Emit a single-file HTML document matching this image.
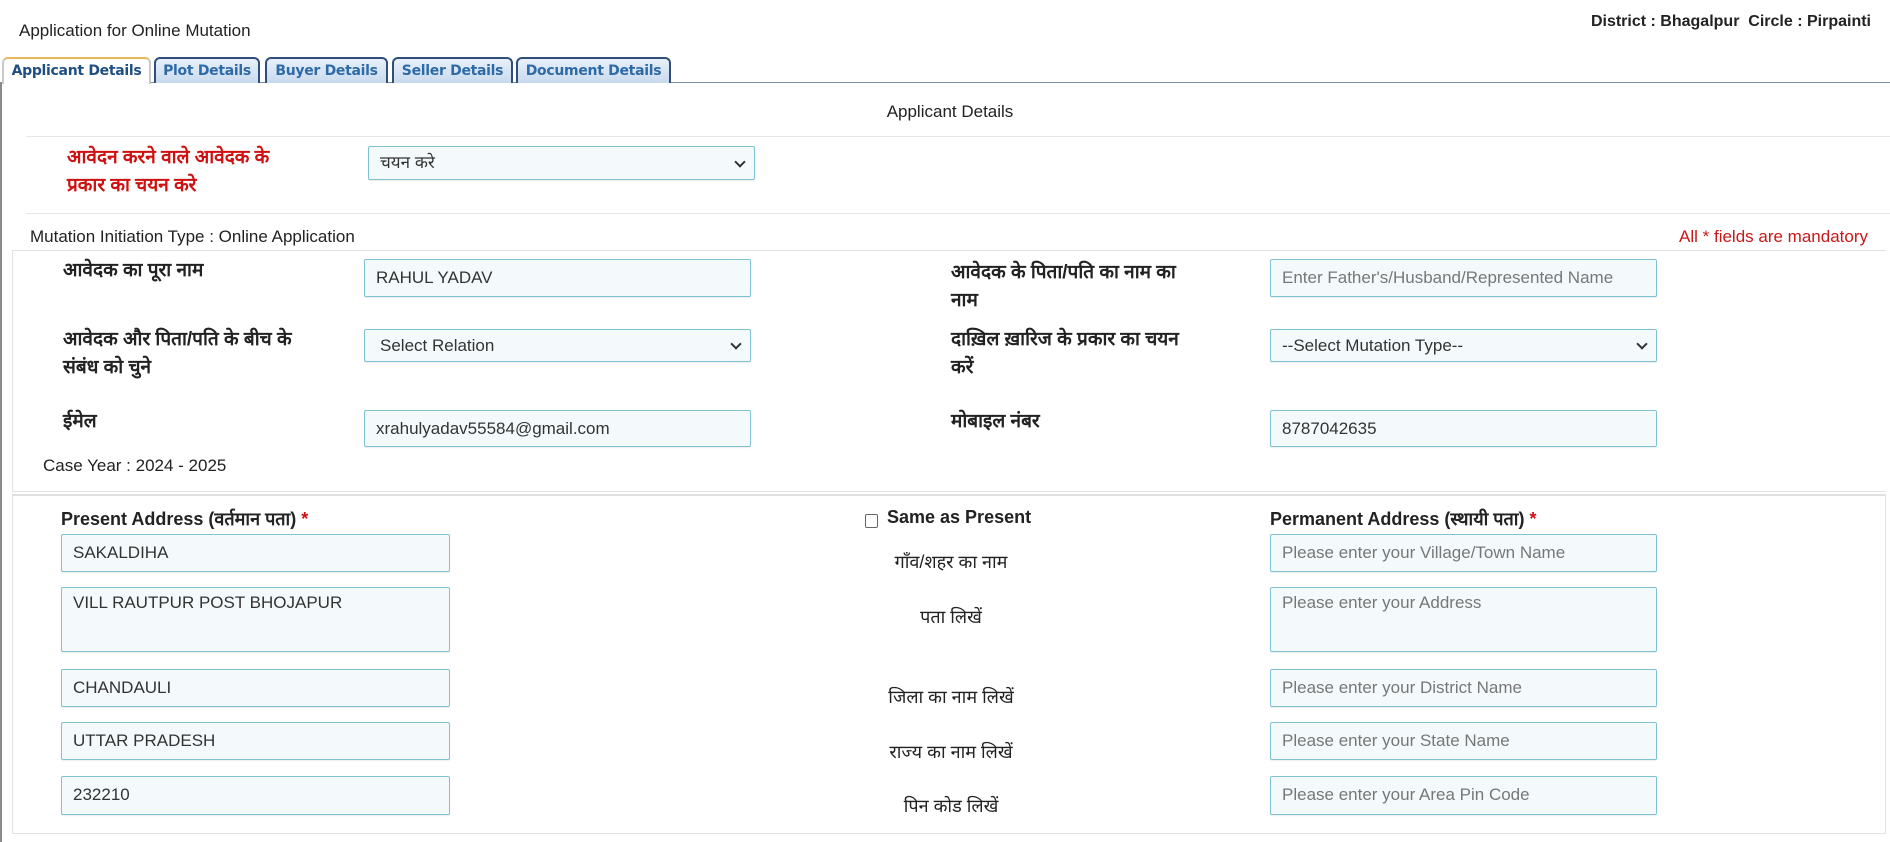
<!DOCTYPE html>
<html><head><meta charset="utf-8"><style>
*{box-sizing:border-box}
body{margin:0;width:1890px;height:831px;background:#fff;font-family:"Liberation Sans",Arial,sans-serif;color:#222;position:relative;overflow:hidden}
.a{position:absolute;white-space:nowrap}
.tab{position:absolute;top:57px;height:26px;border:2px solid #2f4f7a;border-bottom:none;border-radius:6px 6px 0 0;background:linear-gradient(#e8f0fa,#c9daee);color:#2e6aa6;font-weight:bold;font-size:14px;font-family:"DejaVu Sans","Liberation Sans",sans-serif;text-align:center;line-height:24px;letter-spacing:-0.3px}
.tab.on{background:#fff;border-color:#e8b85a #c9c9c9 #fff;color:#1f4f82;height:27px}
.inp{position:absolute;border:1px solid #7fc2d2;background:#f4fafc;border-radius:2px;font-size:17px;color:#333;padding-left:11px;line-height:36px;box-shadow:0 1px 1px rgba(0,0,0,.08)}
.ph{color:#777}
.lbl{position:absolute;font-size:19px;font-weight:bold;color:#222;line-height:28px}
.mid{position:absolute;font-size:18px;color:#222;text-align:center;width:300px;left:801px}
.chev{position:absolute;right:10px;top:14px;width:8px;height:8px;border-right:2px solid #333;border-bottom:2px solid #333;transform:rotate(45deg)}
.hr{position:absolute;height:1px;background:#e6e6e6}
</style></head><body>
<div class="a" style="left:19px;top:21px;font-size:17px">Application for Online Mutation</div>
<div class="a" style="right:19px;top:13px;font-size:16px;font-weight:bold">District : Bhagalpur &nbsp;Circle : Pirpainti</div>

<div style="position:absolute;left:0;top:82px;width:1890px;height:1px;background:#7a8fa8"></div>
<div class="tab on" style="left:2px;width:149px">Applicant Details</div>
<div class="tab" style="left:154px;width:106px">Plot Details</div>
<div class="tab" style="left:265px;width:123px">Buyer Details</div>
<div class="tab" style="left:392px;width:121px">Seller Details</div>
<div class="tab" style="left:516px;width:155px">Document Details</div>
<div style="position:absolute;left:0;top:82px;width:2px;height:760px;background:#8a8a8a"></div>

<div class="a" style="left:0;width:1900px;text-align:center;top:102px;font-size:17px">Applicant Details</div>
<div class="hr" style="left:26px;right:0;top:136px"></div>
<div class="lbl" style="left:67px;top:144px;color:#d01010">आवेदन करने वाले आवेदक के<br>प्रकार का चयन करे</div>
<div class="inp" style="left:368px;top:146px;width:387px;height:34px;line-height:32px">चयन करे<span class="chev" style="top:11px"></span></div>
<div class="hr" style="left:26px;right:0;top:213px"></div>
<div class="a" style="left:30px;top:227px;font-size:17px">Mutation Initiation Type : Online Application</div>
<div class="a" style="right:22px;top:227px;font-size:17px;color:#c81818">All * fields are mandatory</div>

<div style="position:absolute;left:12px;top:250px;width:1874px;height:242px;border:1px solid #e2e2e2;border-right:none"></div>
<div class="lbl" style="left:63px;top:257px">आवेदक का पूरा नाम</div>
<div class="inp" style="left:364px;top:259px;width:387px;height:38px">RAHUL YADAV</div>
<div class="lbl" style="left:951px;top:259px">आवेदक के पिता/पति का नाम का<br>नाम</div>
<div class="inp ph" style="left:1270px;top:259px;width:387px;height:38px">Enter Father's/Husband/Represented Name</div>

<div class="lbl" style="left:63px;top:326px">आवेदक और पिता/पति के बीच के<br>संबंध को चुने</div>
<div class="inp" style="left:364px;top:329px;width:387px;height:33px;line-height:31px;padding-left:15px">Select Relation<span class="chev" style="top:10px"></span></div>
<div class="lbl" style="left:951px;top:326px">दाख़िल ख़ारिज के प्रकार का चयन<br>करें</div>
<div class="inp" style="left:1270px;top:329px;width:387px;height:33px;line-height:31px">--Select Mutation Type--<span class="chev" style="top:10px"></span></div>

<div class="lbl" style="left:63px;top:408px">ईमेल</div>
<div class="inp" style="left:364px;top:410px;width:387px;height:37px">xrahulyadav55584@gmail.com</div>
<div class="lbl" style="left:951px;top:408px">मोबाइल नंबर</div>
<div class="inp" style="left:1270px;top:410px;width:387px;height:37px">8787042635</div>
<div class="a" style="left:43px;top:456px;font-size:17px">Case Year : 2024 - 2025</div>

<div style="position:absolute;left:12px;top:494px;width:1874px;height:340px;border:1px solid #e2e2e2;border-top:2px solid #e0e0e0;border-right:1px solid #e2e2e2"></div>
<div class="a" style="left:61px;top:507px;font-size:18px;font-weight:bold">Present Address (वर्तमान पता) <span style="color:#d01010">*</span></div>
<div style="position:absolute;left:865px;top:514px;width:13px;height:14px;border:1px solid #666;border-radius:2px"></div>
<div class="a" style="left:887px;top:507px;font-size:18px;font-weight:bold">Same as Present</div>
<div class="a" style="left:1270px;top:507px;font-size:18px;font-weight:bold">Permanent Address (स्थायी पता) <span style="color:#d01010">*</span></div>

<div class="inp" style="left:61px;top:534px;width:389px;height:38px">SAKALDIHA</div>
<div class="inp" style="left:61px;top:587px;width:389px;height:65px;line-height:30px">VILL RAUTPUR POST BHOJAPUR</div>
<div class="inp" style="left:61px;top:669px;width:389px;height:38px">CHANDAULI</div>
<div class="inp" style="left:61px;top:722px;width:389px;height:38px">UTTAR PRADESH</div>
<div class="inp" style="left:61px;top:776px;width:389px;height:39px">232210</div>

<div class="mid" style="top:550px">गाँव/शहर का नाम</div>
<div class="mid" style="top:605px">पता लिखें</div>
<div class="mid" style="top:685px">जिला का नाम लिखें</div>
<div class="mid" style="top:740px">राज्य का नाम लिखें</div>
<div class="mid" style="top:794px">पिन कोड लिखें</div>

<div class="inp ph" style="left:1270px;top:534px;width:387px;height:38px">Please enter your Village/Town Name</div>
<div class="inp ph" style="left:1270px;top:587px;width:387px;height:65px;line-height:30px">Please enter your Address</div>
<div class="inp ph" style="left:1270px;top:669px;width:387px;height:38px">Please enter your District Name</div>
<div class="inp ph" style="left:1270px;top:722px;width:387px;height:38px">Please enter your State Name</div>
<div class="inp ph" style="left:1270px;top:776px;width:387px;height:39px">Please enter your Area Pin Code</div>
</body></html>
